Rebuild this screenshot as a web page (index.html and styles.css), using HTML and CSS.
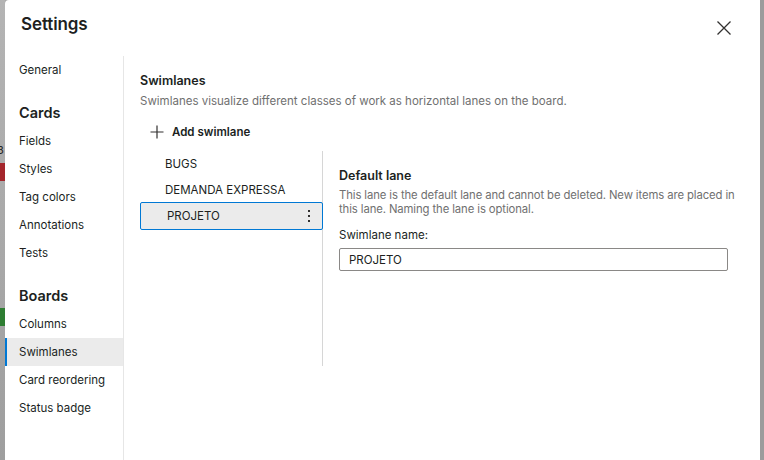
FILE: index.html
```html
<!DOCTYPE html>
<html>
<head>
<meta charset="utf-8">
<link rel="stylesheet" href="styles.css">
</head>
<body>
<div class="page">
  <div class="backdrop">
    <span class="bd-num">3</span>
    <span class="bd-red"></span>
    <span class="bd-green"></span>
  </div>
  <div class="dialog">
    <div class="header">
      <h1 class="title">Settings</h1>
      <button class="close" aria-label="Close">
        <svg width="16" height="16" viewBox="0 0 16 16"><path d="M1.5 1.5 L14.5 14.5 M14.5 1.5 L1.5 14.5" stroke="#323130" stroke-width="1.3" fill="none"/></svg>
      </button>
    </div>
    <div class="body">
      <nav class="nav">
        <div class="nav-item">General</div>
        <div class="nav-group">Cards</div>
        <div class="nav-item">Fields</div>
        <div class="nav-item">Styles</div>
        <div class="nav-item">Tag colors</div>
        <div class="nav-item">Annotations</div>
        <div class="nav-item">Tests</div>
        <div class="nav-group">Boards</div>
        <div class="nav-item">Columns</div>
        <div class="nav-item selected">Swimlanes</div>
        <div class="nav-item">Card reordering</div>
        <div class="nav-item">Status badge</div>
      </nav>
      <main class="content">
        <h2 class="sec-title">Swimlanes</h2>
        <p class="sec-desc">Swimlanes visualize different classes of work as horizontal lanes on the board.</p>
        <button class="add">
          <svg width="14" height="14" viewBox="0 0 14 14"><path d="M7 0.5 V13.5 M0.5 7 H13.5" stroke="#323130" stroke-width="1.2" fill="none"/></svg>
          <span>Add swimlane</span>
        </button>
        <div class="lanes">
          <div class="lane-list">
            <div class="lane">BUGS</div>
            <div class="lane">DEMANDA EXPRESSA</div>
            <div class="lane active"><span>PROJETO</span><span class="kebab"><i></i><i></i><i></i></span></div>
          </div>
          <div class="lane-detail">
            <h3 class="det-title">Default lane</h3>
            <p class="det-desc">This lane is the default lane and cannot be deleted. New items are placed in this lane. Naming the lane is optional.</p>
            <label class="det-label">Swimlane name:</label>
            <div class="input">PROJETO</div>
          </div>
        </div>
      </main>
    </div>
  </div>
  <div class="backdrop-right"></div>
</div>
</body>
</html>
```
FILE: styles.css
```css
* { box-sizing: border-box; }
html, body { margin: 0; padding: 0; }
body {
  width: 764px; height: 460px; overflow: hidden;
  font-family: Inter, "Liberation Sans", sans-serif;
  color: #201f1e;
  background: #a8a8a8;
}
.page { display: flex; height: 460px; }
.backdrop {
  width: 5px; flex: none; position: relative; overflow: hidden;
  background: linear-gradient(#b4b4b4, #9e9e9e);
}
.bd-num { position: absolute; left: -3px; top: 143px; font-size: 11px; color: #222; }
.bd-red { position: absolute; left: 0; top: 163px; width: 5px; height: 18px; background: #a4262c; }
.bd-green { position: absolute; left: 0; top: 308px; width: 5px; height: 18px; background: #2e7d32; }
.backdrop-right { width: 4px; flex: none; background: #9c9c9c; }
.dialog {
  flex: 1; background: #fff; display: flex; flex-direction: column;
  border-top-left-radius: 4px;
}
.header {
  display: flex; align-items: center; justify-content: space-between;
  height: 56px; padding: 0 28px 0 16px;
}
.title { margin: 0; font-size: 17px; font-weight: 600; letter-spacing: -0.1px; position: relative; top: -4px; }
.close { border: 0; background: none; padding: 0; width: 16px; height: 16px; display: flex; }
.body { flex: 1; display: flex; }
.nav {
  width: 119px; flex: none; border-right: 1px solid #e6e6e6;
}
.nav-item {
  height: 28px; display: flex; align-items: center;
  padding-left: 14px; font-size: 11.5px; color: #201f1e;
}
.nav-item.selected { background: #ebebeb; border-left: 2px solid #0078d4; padding-left: 12px; }
.nav-group {
  font-size: 14.5px; font-weight: 600; padding-left: 14px;
  height: 30px; display: flex; align-items: center; margin-top: 13px;
}
.content { flex: 1; padding: 17px 0 0 16px; }
.sec-title { margin: 0; font-size: 12.5px; font-weight: 600; height: 16px; line-height: 16px; }
.sec-desc { margin: 4px 0 0; font-size: 11.5px; color: #707070; line-height: 16px; }
.add {
  margin: 15px 0 0 10px; border: 0; background: none; padding: 0;
  display: flex; align-items: center; gap: 8px;
  font-family: inherit; font-size: 11.5px; font-weight: 600; color: #201f1e;
  height: 16px;
}
.lanes { display: flex; margin-top: 11px; }
.lane-list { width: 183px; flex: none; border-right: 1px solid #d6d6d6; height: 215px; }
.lane {
  height: 26px; display: flex; align-items: center; padding-left: 25px;
  font-size: 11.5px;
}
.lane.active {
  height: 28px; margin-top: -1px; background: #ebebeb; border: 1px solid #0078d4; border-radius: 2px;
  padding-left: 26px; justify-content: space-between; padding-right: 12px;
  margin-right: -1px;
}
.kebab { display: flex; flex-direction: column; gap: 3px; }
.kebab i { width: 2px; height: 2px; background: #323130; display: block; }
.lane-detail { flex: 1; padding: 17px 32px 0 16px; }
.det-title { margin: 0; font-size: 12.5px; font-weight: 600; line-height: 16px; }
.det-desc { margin: 4px -20px 0 0; font-size: 11.3px; color: #707070; line-height: 14px; letter-spacing: -0.1px; }
.det-label { display: block; margin-top: 12px; font-size: 11.5px; line-height: 14px; }
.input {
  margin-top: 6px; height: 23px; border: 1px solid #8a8886; border-radius: 2px;
  padding-left: 9px; display: flex; align-items: center; font-size: 11.5px;
}
```
